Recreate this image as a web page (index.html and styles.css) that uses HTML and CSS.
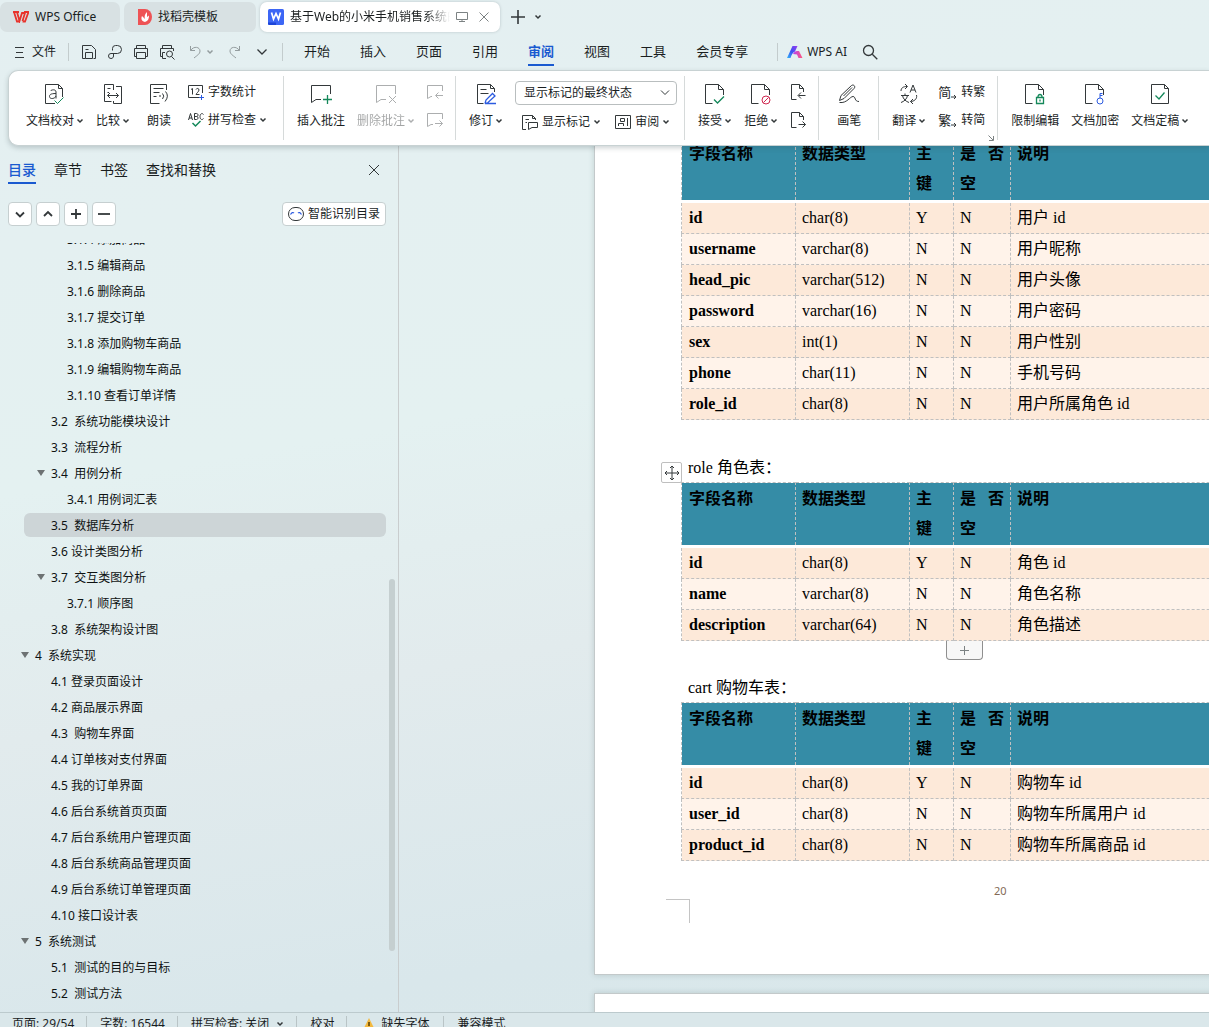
FILE: index.html
```html
<!DOCTYPE html>
<html lang="zh-CN">
<head>
    <meta charset="UTF-8">
    <meta name="viewport" content="width=device-width, initial-scale=1.0">
    <title>WPS Office</title>
    <link rel="stylesheet" href="styles.css">
</head>
<body>
    <!-- shared icon shapes -->
    <svg class="sprite" width="0" height="0" aria-hidden="true">
        <symbol id="chev" viewBox="0 0 8 8"><path d="M1.5 2.5L4 5l2.5-2.5" stroke-width="1.5"/></symbol>
        <symbol id="doc" viewBox="0 0 22 22"><path d="M8.500 20.500H1.500V1.500H14.500L19.500 6.500V12M14.500 1.500V6.500H19.500"/></symbol>
        <symbol id="bubble" viewBox="0 0 24 22"><path d="M12 16.500H7L2.500 19.500V2.500H21.500V11"/></symbol>
        <symbol id="tri" viewBox="0 0 8 6"><path d="M0 0H8L4 6Z"/></symbol>
    </svg>

    <header class="titlebar">
        <button class="tab tab-home">
            <svg width="16" height="12" viewBox="0 0 16 12"><path d="M0 1H6M4 1L6.500 10L9 2H12L9.500 10M1 1L4 10.500H6.500M9.500 10.500H12L15.500 1H11" stroke="#e8322b" stroke-width="1.8"/></svg>
            <span>WPS Office</span>
        </button>
        <button class="tab tab-docer">
            <svg width="14" height="16" viewBox="0 0 14 16"><path d="M0 0H7A7 8 0 0 1 7 16H0Z" fill="#ee5355" stroke="none"/><path d="M7 13C3 12 3 9 4 7L7 10C6 7 7 5 9 3V8L11 6.500C11 10 10 12 7 13Z" fill="#fff" stroke="none"/></svg>
            <span>找稻壳模板</span>
        </button>
        <div class="tab tab-active">
            <svg width="16" height="16" viewBox="0 0 16 16"><rect width="16" height="16" rx="1.500" fill="#3c66f5" stroke="none"/><path d="M0 13.500H8V16H1.500A1.500 1.500 0 0 1 0 14.500Z" fill="#1d45d8" stroke="none"/><path d="M3.500 3.500L5.500 10L8 4.500L10.500 10L12.500 3.500" stroke="#fff" stroke-width="1.7"/></svg>
            <span class="tab-title">基于Web的小米手机销售系统的设计</span>
            <svg class="dim" width="12" height="12" viewBox="0 0 12 12"><path d="M.5 1.500H11.500V8.500H.5ZM3 10.500H9M6 8.500V10.500"/></svg>
            <button class="tab-close" aria-label="关闭"><svg class="dim" width="10" height="10" viewBox="0 0 10 10"><path d="M.5.5L9.500 9.500M9.500.5L.5 9.500"/></svg></button>
        </div>
        <button class="new-tab" aria-label="新建"><svg width="14" height="14" viewBox="0 0 14 14"><path d="M7 0V14M0 7H14" stroke-width="1.6"/></svg></button>
        <button class="icon-btn" aria-label="标签列表"><svg width="8" height="8"><use href="#chev"/></svg></button>
    </header>

    <nav class="menubar">
        <button class="file-btn">
            <svg width="9" height="12" viewBox="0 0 9 12"><path d="M0 1.500H9M1 6.500H8M0 11.500H9"/></svg>
            <span>文件</span>
        </button>
        <i class="vline"></i>
        <div class="quick">
            <button aria-label="保存"><svg width="16" height="16" viewBox="0 0 16 16"><path d="M4.500 14.500H1.500V1.500H10.500L14.500 5.500V14.500H12.500M4.500 14.500V8.500H11.500V14.500ZM4.500 5.500H7.500"/></svg></button>
            <button aria-label="输出为PDF"><svg width="16" height="16" viewBox="0 0 16 16"><path d="M5.500 6.500V4.500A3 3 0 0 1 8.500 1.500H10.500A4 4 0 0 1 10.500 9.500H4A2 2 0 0 0 4 14.500C5.500 14.500 6.500 13.500 6.500 12V9.500"/></svg></button>
            <button aria-label="打印"><svg width="16" height="16" viewBox="0 0 16 16"><path d="M3.500 4.500V1.500H12.500V4.500M3.500 12.500H1.500V4.500H14.500V12.500H12.500M3.500 8.500H12.500V14.500H3.500Z"/></svg></button>
            <button aria-label="打印预览"><svg width="16" height="16" viewBox="0 0 16 16"><path d="M3.500 4.500V1.500H12.500V4.500M3.500 12.500H1.500V4.500H14.500V7M3.500 8.500H6M3.500 8.500V14.500H7M12.500 12.500L15.500 15.500"/><circle cx="10.500" cy="10" r="3"/></svg></button>
            <button class="undo" aria-label="撤销"><svg width="14" height="14" viewBox="0 0 14 14"><path d="M2.500 1V5.500H7M2.500 5.500C6 .5 12 2 12 6C12 9 9 10.500 6 13"/></svg><svg width="8" height="8"><use href="#chev"/></svg></button>
            <button class="undo" aria-label="恢复"><svg width="14" height="14" viewBox="0 0 14 14"><path d="M11.500 1V5.500H7M11.500 5.500C8 .5 2 2 2 6C2 9 5 10.500 8 13"/></svg></button>
            <button aria-label="更多"><svg width="12" height="8" viewBox="0 0 12 8"><path d="M1.500 1.500L6 6L10.500 1.500" stroke-width="1.300"/></svg></button>
        </div>
        <i class="vline"></i>
        <div class="menus">
            <button>开始</button>
            <button>插入</button>
            <button>页面</button>
            <button>引用</button>
            <button class="current">审阅</button>
            <button>视图</button>
            <button>工具</button>
            <button>会员专享</button>
        </div>
        <i class="vline"></i>
        <button class="ai">
            <svg width="16" height="12" viewBox="0 0 16 12"><defs><linearGradient id="ai1" x1="0" y1="1" x2="1" y2="0"><stop offset="0" stop-color="#2fb4f7"/><stop offset=".5" stop-color="#3d4ff3"/><stop offset="1" stop-color="#9a3cf0"/></linearGradient><linearGradient id="ai2"><stop offset="0" stop-color="#b53df2"/><stop offset="1" stop-color="#ff5a7d"/></linearGradient></defs><path d="M0 12L5.500 0H10.500L8 5.500C6 6 5 8 3.500 12Z" fill="url(#ai1)" stroke="none"/><path d="M6 8C7 5.500 9 5 12 5L15.500 12H11.500L10 8.500Z" fill="url(#ai2)" stroke="none"/></svg>
            <span>WPS AI</span>
        </button>
        <button class="icon-btn" aria-label="搜索"><svg width="16" height="16" viewBox="0 0 16 16"><circle cx="6.500" cy="6.500" r="5" stroke-width="1.300"/><path d="M10.300 10.300L15.300 15.300" stroke-width="1.300"/></svg></button>
    </nav>

    <section class="ribbon">
        <div class="group group-proof">
            <button class="big">
                <svg width="22" height="22" viewBox="0 0 22 22"><path d="M11 20.500H1.500V1.500H14.500L18.500 5.500V14M14.500 1.500V5.500H18.500M6.500 8C7.500 6.500 12 6 12 9V15.500M12 10.500C6 10.500 5.500 12 5.500 13.500C5.500 16.500 11 16 12 13"/><path class="green" d="M10.500 17.500L13.500 20.500L19.500 14.500"/></svg>
                <span>文档校对<svg width="8" height="8"><use href="#chev"/></svg></span>
            </button>
            <button class="big">
                <svg width="22" height="22" viewBox="0 0 22 22"><path d="M9.500 18.500H2.500V1.500H11.500V7M5.500 5.500H8.500M5.500 9.500H7M14 3.500H19.500V20.500H11.500V18M5.500 12.500H16.500M8 10L5.500 12.500L8 15M14 10L16.500 12.500L14 15"/></svg>
                <span>比较<svg width="8" height="8"><use href="#chev"/></svg></span>
            </button>
            <button class="big plain">
                <svg width="22" height="22" viewBox="0 0 22 22"><path d="M11.500 20.500H2.500V1.500H18.500V7M5.500 5.500H15.500M5.500 9.500H11.500M5.500 13.500H8.500M12 12V14M14.500 10.500Q17 13 14.500 16M17.500 8.500Q21.500 13 17 18.500"/></svg>
                <span>朗读</span>
            </button>
            <div class="stack">
                <button class="small">
                    <svg width="16" height="16" viewBox="0 0 16 16"><path d="M11 13.500H.5V1.500H14.500V9M3 5.500L4.500 4.500V10.500M8 5.500C8.500 4 11 4 11 6C11 7.500 8.500 9 8 10.500H11.500"/><path class="blue" d="M13.500 11V16M11 13.500H16"/></svg>
                    <span>字数统计</span>
                </button>
                <button class="small">
                    <svg width="16" height="16" viewBox="0 0 16 16"><path d="M.5 8L2.500 1.500L4.500 8M1 6H4M6.500 1.500V7.500H8.500C10.500 7.500 10.500 4.500 8.500 4.500H6.500M6.500 1.500H8.500C10.500 1.500 10.500 4.500 8.500 4.500M15.500 2.500C14 .5 12 2 12 4.500C12 7.500 14 8.500 15.500 6.500"/><path class="green" d="M4.500 11L7.500 14L12.500 9" stroke-width="1.500"/></svg>
                    <span>拼写检查</span><svg width="8" height="8"><use href="#chev"/></svg>
                </button>
            </div>
        </div>

        <div class="group">
            <button class="big">
                <svg width="24" height="22" viewBox="0 0 24 22"><use href="#bubble"/><path class="green" d="M18.500 12V21M14 16.500H23" stroke-width="1.300"/></svg>
                <span>插入批注</span>
            </button>
            <button class="big disabled" disabled>
                <svg width="24" height="22" viewBox="0 0 24 22"><use href="#bubble"/><path d="M15 13L22 20M22 13L15 20"/></svg>
                <span>删除批注<svg width="8" height="8"><use href="#chev"/></svg></span>
            </button>
            <div class="stack">
                <button class="small disabled" disabled aria-label="上一条"><svg width="16" height="16" viewBox="0 0 16 16"><path d="M5 12.500H4L.5 14.500V1.500H15.500V7M16 11.500H9M11.500 8.500L8.500 11.500L11.500 14.500"/></svg></button>
                <button class="small disabled" disabled aria-label="下一条"><svg width="16" height="16" viewBox="0 0 16 16"><path d="M6 12.500H4L.5 14.500V1.500H15.500V7M8 11.500H15.500M12.500 8.500L15.500 11.500L12.500 14.500"/></svg></button>
            </div>
        </div>

        <div class="group group-track">
            <button class="big">
                <svg width="22" height="22" viewBox="0 0 22 22"><path d="M8.500 20.500H2.500V1.500H15.500L19.500 5.500V9M15.500 1.500V5.500H19.500M5.500 6.500H11.500M5.500 10.500H13.500"/><path class="blue" d="M10 20.500L11 17L17.500 10.500L20 13L13 19.500L10 20.500H21" stroke-width="1.300"/></svg>
                <span>修订<svg width="8" height="8"><use href="#chev"/></svg></span>
            </button>
            <div class="stack">
                <div class="select-wrap">
                    <select aria-label="标记显示状态">
                        <option>显示标记的最终状态</option>
                        <option>最终状态</option>
                        <option>原始状态</option>
                    </select>
                    <svg width="10" height="6" viewBox="0 0 10 6"><path d="M1 .5L5 4.500L9 .5"/></svg>
                </div>
                <div class="small-row">
                    <button class="small">
                        <svg width="16" height="16" viewBox="0 0 16 16"><path d="M4 15.500H.5V1.500H10.500L13.500 4.500V6M10.500 1.500V4.500H13.500M3.500 5.500H7M3.500 8.500H5M6.500 8.500H15.500V13.500H10L6.500 15.500Z"/></svg>
                        <span>显示标记</span><svg width="8" height="8"><use href="#chev"/></svg>
                    </button>
                    <button class="small">
                        <svg width="16" height="16" viewBox="0 0 16 16"><path d="M.5 1.500H15.500V14.500H.5ZM12.500 4V12M5.500 4.500H9.500V7.500H5.500ZM3.500 12V9.500H8.500V12"/></svg>
                        <span>审阅</span><svg width="8" height="8"><use href="#chev"/></svg>
                    </button>
                </div>
            </div>
        </div>

        <div class="group">
            <button class="big">
                <svg width="22" height="22" viewBox="0 0 22 22"><use href="#doc"/><path class="green" d="M10 16.500L13.500 20L20 13.500" stroke-width="1.300"/></svg>
                <span>接受<svg width="8" height="8"><use href="#chev"/></svg></span>
            </button>
            <button class="big">
                <svg width="22" height="22" viewBox="0 0 22 22"><use href="#doc"/><g class="red"><circle cx="16" cy="17" r="4"/><path d="M13.500 19.500L18.500 14.500"/></g></svg>
                <span>拒绝<svg width="8" height="8"><use href="#chev"/></svg></span>
            </button>
            <div class="stack">
                <button class="small" aria-label="上一处修订"><svg width="16" height="16" viewBox="0 0 16 16"><path d="M6.500 15.500H1.500V.5H9.500L13.500 4.500V8M9.500 .5V4.500H13.500M15.500 11.500H8.500M11 8.500L8 11.500L11 14.500"/></svg></button>
                <button class="small" aria-label="下一处修订"><svg width="16" height="16" viewBox="0 0 16 16"><path d="M6.500 15.500H1.500V.5H9.500L13.500 4.500V8M9.500 .5V4.500H13.500M8.500 12.500H15.500M12.500 9.500L15.500 12.500L12.500 15.500"/></svg></button>
            </div>
        </div>

        <div class="group">
            <button class="big plain">
                <svg width="22" height="22" viewBox="0 0 22 22"><path d="M1.500 17.500L3 12.500L13.500 2.500C15.500 1 18 3.500 16 5.500L6 15.500ZM5.500 13L14 4.500M1.500 19.500C9 20.500 12 13.500 15 13.500C18 13.500 16 18.500 21 18.500"/></svg>
                <span>画笔</span>
            </button>
        </div>

        <div class="group">
            <button class="big">
                <svg width="22" height="22" viewBox="0 0 22 22"><path d="M12 9.500L15 2L18 9.500M13 7H17M3 8C3 5 5 3.500 9 3.500M7 1L9.500 3.500L7 6M18.500 12C19.500 16 16 18.500 12.500 18.500M15 16L12.500 18.500L15 21M3 12.500H11M7 10.500V12.500M9.500 12.500C9 16 6 18.500 3 19.500M4.500 12.500C5 16 8 18.500 11 19.500"/></svg>
                <span>翻译<svg width="8" height="8"><use href="#chev"/></svg></span>
            </button>
            <div class="stack">
                <button class="small"><span class="glyph">简<svg width="6" height="6" viewBox="0 0 6 6"><path d="M0 3H5M3 1L5 3L3 5"/></svg></span><span>转繁</span></button>
                <button class="small"><span class="glyph">繁<svg width="6" height="6" viewBox="0 0 6 6"><path d="M0 3H5M3 1L5 3L3 5"/></svg></span><span>转简</span></button>
            </div>
            <svg class="launcher dim" width="6" height="6" viewBox="0 0 6 6"><path d="M.5 .5L5 5M5.500 1V5.500H1"/></svg>
        </div>

        <div class="group">
            <button class="big">
                <svg width="22" height="22" viewBox="0 0 22 22"><use href="#doc"/><path class="green" d="M12.500 14.500H19.500V20.500H12.500ZM14 14.500C13.500 10.500 18.500 10.500 18 14.500M16 16.500V18.500" stroke-width="1.300"/></svg>
                <span>限制编辑</span>
            </button>
            <button class="big">
                <svg width="22" height="22" viewBox="0 0 22 22"><use href="#doc"/><g class="blue"><circle cx="16" cy="18" r="3"/><path d="M16 15V10.500H18.500M16 12.500H18.500"/></g></svg>
                <span>文档加密</span>
            </button>
            <button class="big">
                <svg width="22" height="22" viewBox="0 0 22 22"><path d="M2.500 1.500H15.500L19.500 5.500V20.500H2.500ZM15.500 1.500V5.500H19.500"/><path class="green" d="M6.500 12.500L10 16L15.500 9.500" stroke-width="1.300"/></svg>
                <span>文档定稿<svg width="8" height="8"><use href="#chev"/></svg></span>
            </button>
        </div>
    </section>

    <main class="workspace">
        <aside class="outline">
            <div class="side-tabs">
                <button class="current">目录</button>
                <button>章节</button>
                <button>书签</button>
                <button>查找和替换</button>
                <button class="side-close" aria-label="关闭"><svg width="12" height="12" viewBox="0 0 12 12"><path d="M1 1L11 11M11 1L1 11"/></svg></button>
            </div>
            <div class="side-tools">
                <button aria-label="展开"><svg width="12" height="12" viewBox="0 0 12 12"><path d="M2 4.500L6 8.500L10 4.500" stroke-width="1.800"/></svg></button>
                <button aria-label="收起"><svg width="12" height="12" viewBox="0 0 12 12"><path d="M2 8L6 4L10 8" stroke-width="1.800"/></svg></button>
                <button aria-label="放大"><svg width="12" height="12" viewBox="0 0 12 12"><path d="M6 1V11M1 6H11" stroke-width="1.800"/></svg></button>
                <button aria-label="缩小"><svg width="12" height="12" viewBox="0 0 12 12"><path d="M0 6H12" stroke-width="1.800"/></svg></button>
                <button class="smart">
                    <svg width="16" height="14" viewBox="0 0 16 14"><rect x=".5" y=".5" width="15" height="13" rx="6.500"/><path class="blue" d="M2.500 7.500Q4.500 4.500 6 6M10 6Q11.500 4.500 13.500 7.500" stroke-width="1.200"/></svg>
                    <span>智能识别目录</span>
                </button>
            </div>
            <div class="tree">
                <ul>
                    <li class="l3"><a href="#">3.1.4 添加商品</a></li>
                    <li class="l3"><a href="#">3.1.5 编辑商品</a></li>
                    <li class="l3"><a href="#">3.1.6 删除商品</a></li>
                    <li class="l3"><a href="#">3.1.7 提交订单</a></li>
                    <li class="l3"><a href="#">3.1.8 添加购物车商品</a></li>
                    <li class="l3"><a href="#">3.1.9 编辑购物车商品</a></li>
                    <li class="l3"><a href="#">3.1.10 查看订单详情</a></li>
                    <li class="l2"><a href="#">3.2  系统功能模块设计</a></li>
                    <li class="l2"><a href="#">3.3  流程分析</a></li>
                    <li class="l2"><a href="#"><svg width="8" height="6"><use href="#tri"/></svg>3.4  用例分析</a></li>
                    <li class="l3"><a href="#">3.4.1 用例词汇表</a></li>
                    <li class="l2 selected"><a href="#">3.5  数据库分析</a></li>
                    <li class="l2"><a href="#">3.6 设计类图分析</a></li>
                    <li class="l2"><a href="#"><svg width="8" height="6"><use href="#tri"/></svg>3.7  交互类图分析</a></li>
                    <li class="l3"><a href="#">3.7.1 顺序图</a></li>
                    <li class="l2"><a href="#">3.8  系统架构设计图</a></li>
                    <li class="l1"><a href="#"><svg width="8" height="6"><use href="#tri"/></svg>4  系统实现</a></li>
                    <li class="l2"><a href="#">4.1 登录页面设计</a></li>
                    <li class="l2"><a href="#">4.2 商品展示界面</a></li>
                    <li class="l2"><a href="#">4.3  购物车界面</a></li>
                    <li class="l2"><a href="#">4.4 订单核对支付界面</a></li>
                    <li class="l2"><a href="#">4.5 我的订单界面</a></li>
                    <li class="l2"><a href="#">4.6 后台系统首页页面</a></li>
                    <li class="l2"><a href="#">4.7 后台系统用户管理页面</a></li>
                    <li class="l2"><a href="#">4.8 后台系统商品管理页面</a></li>
                    <li class="l2"><a href="#">4.9 后台系统订单管理页面</a></li>
                    <li class="l2"><a href="#">4.10 接口设计表</a></li>
                    <li class="l1"><a href="#"><svg width="8" height="6"><use href="#tri"/></svg>5  系统测试</a></li>
                    <li class="l2"><a href="#">5.1  测试的目的与目标</a></li>
                    <li class="l2"><a href="#">5.2  测试方法</a></li>
                </ul>
                <i class="thumb"></i>
            </div>
        </aside>

        <div class="canvas">
            <article class="page">
                <table>
                    <colgroup><col class="c1"><col class="c2"><col class="c3"><col class="c4"><col></colgroup>
                    <thead>
                        <tr><th>字段名称</th><th>数据类型</th><th>主键</th><th><span class="spread">是 否</span>空</th><th>说明</th></tr>
                    </thead>
                    <tbody>
                        <tr><th>id</th><td>char(8)</td><td>Y</td><td>N</td><td>用户 id</td></tr>
                        <tr><th>username</th><td>varchar(8)</td><td>N</td><td>N</td><td>用户昵称</td></tr>
                        <tr><th>head_pic</th><td>varchar(512)</td><td>N</td><td>N</td><td>用户头像</td></tr>
                        <tr><th>password</th><td>varchar(16)</td><td>N</td><td>N</td><td>用户密码</td></tr>
                        <tr><th>sex</th><td>int(1)</td><td>N</td><td>N</td><td>用户性别</td></tr>
                        <tr><th>phone</th><td>char(11)</td><td>N</td><td>N</td><td>手机号码</td></tr>
                        <tr><th>role_id</th><td>char(8)</td><td>N</td><td>N</td><td>用户所属角色 id</td></tr>
                    </tbody>
                </table>
                <p>role 角色表：</p>
                <div class="table-box">
                    <button class="move-handle" aria-label="移动表格"><svg width="16" height="16" viewBox="0 0 16 16"><path d="M8 1V15M1 8H15M6 3L8 1L10 3M6 13L8 15L10 13M3 6L1 8L3 10M13 6L15 8L13 10"/></svg></button>
                    <table>
                        <colgroup><col class="c1"><col class="c2"><col class="c3"><col class="c4"><col></colgroup>
                        <thead>
                            <tr><th>字段名称</th><th>数据类型</th><th>主键</th><th><span class="spread">是 否</span>空</th><th>说明</th></tr>
                        </thead>
                        <tbody>
                            <tr><th>id</th><td>char(8)</td><td>Y</td><td>N</td><td>角色 id</td></tr>
                            <tr><th>name</th><td>varchar(8)</td><td>N</td><td>N</td><td>角色名称</td></tr>
                            <tr><th>description</th><td>varchar(64)</td><td>N</td><td>N</td><td>角色描述</td></tr>
                        </tbody>
                    </table>
                    <button class="add-row" aria-label="添加行"><svg class="dim" width="9" height="9" viewBox="0 0 9 9"><path d="M4.500 0V9M0 4.500H9"/></svg></button>
                </div>
                <p>cart 购物车表：</p>
                <table>
                    <colgroup><col class="c1"><col class="c2"><col class="c3"><col class="c4"><col></colgroup>
                    <thead>
                        <tr><th>字段名称</th><th>数据类型</th><th>主键</th><th><span class="spread">是 否</span>空</th><th>说明</th></tr>
                    </thead>
                    <tbody>
                        <tr><th>id</th><td>char(8)</td><td>Y</td><td>N</td><td>购物车 id</td></tr>
                        <tr><th>user_id</th><td>char(8)</td><td>N</td><td>N</td><td>购物车所属用户 id</td></tr>
                        <tr><th>product_id</th><td>char(8)</td><td>N</td><td>N</td><td>购物车所属商品 id</td></tr>
                    </tbody>
                </table>
                <footer>20</footer>
                <i class="crop"></i>
            </article>
            <article class="page page-next"></article>
        </div>
    </main>

    <footer class="statusbar">
        <span>页面: 29/54</span>
        <span>字数: 16544</span>
        <span>拼写检查: 关闭 <svg width="8" height="8"><use href="#chev"/></svg></span>
        <span>校对</span>
        <span class="warn"><svg width="12" height="12" viewBox="0 0 12 12"><path d="M6 0L12 12H0Z" fill="#f3b93f" stroke="none"/><path d="M6 4V8M6 9.500V11" stroke="#5a3c00" stroke-width="1.500"/></svg>缺失字体</span>
        <span>兼容模式</span>
    </footer>
</body>
</html>
```

FILE: styles.css
```css
* {
    box-sizing: border-box;
}

body {
    margin: 0;
    height: 100vh;
    overflow: hidden;
    display: flex;
    flex-direction: column;
    font-family: "Noto Sans", "Noto Sans CJK SC", sans-serif;
    font-size: 12px;
    line-height: 16px;
    color: #1a1e1f;
    background: linear-gradient(170deg, #e4eff1 0%, #e4f1f1 40%, #e2ebed 60%, #d9e7eb 85%, #dae8ea 100%);
}

button {
    font: inherit;
    color: inherit;
    background: none;
    border: 0;
    padding: 0;
    cursor: pointer;
    white-space: nowrap;
}

svg {
    fill: none;
    stroke: #33383a;
    flex: none;
    display: block;
}

.sprite {
    position: absolute;
}

.green {
    stroke: #14885a;
}

.blue {
    stroke: #2c5be0;
}

.red {
    stroke: #d0274f;
}

.dim {
    stroke: #7c8283;
}

/* title bar */
.titlebar {
    flex: none;
    display: flex;
    align-items: center;
    height: 34px;
    gap: 4px;
    padding-bottom: 1px;
}

.tab {
    display: flex;
    align-items: center;
    height: 30px;
    padding: 0 14px;
    gap: 6px;
    border-radius: 7px;
    background: #d8e1e3;
}

.tab-home {
    width: 120px;
    padding-left: 13px;
}

.tab-docer {
    width: 132px;
}

.tab-active {
    width: 240px;
    padding: 0 11px 0 8px;
    background: #fff;
    box-shadow: 0 0 3px #b7c3c5;
}

.tab-title {
    flex: 1;
    overflow: hidden;
    white-space: nowrap;
    -webkit-mask-image: linear-gradient(90deg, #000 85%, transparent);
    mask-image: linear-gradient(90deg, #000 85%, transparent);
}

.tab-close {
    margin-left: 5px;
}

.new-tab {
    margin: 0 5px 0 7px;
}

/* menu row */
.menubar {
    flex: none;
    display: flex;
    align-items: center;
    height: 36px;
}

.file-btn {
    display: flex;
    align-items: center;
    gap: 8px;
    padding: 0 12px 0 15px;
}

.vline {
    width: 1px;
    height: 18px;
    background: #c3cccd;
}

.quick {
    display: flex;
    align-items: center;
    gap: 10px;
    padding: 0 14px 0 12px;
}

.quick button {
    display: flex;
    align-items: center;
    gap: 4px;
}

.quick .undo {
    margin-left: 3px;
    opacity: 0.45;
}

.quick .undo + button {
    margin-left: 4px;
}

.menus {
    display: flex;
    gap: 30px;
    padding: 0 29px 0 21px;
    font-size: 13px;
}

.menus button {
    height: 28px;
    border-bottom: 2px solid transparent;
}

.menus .current {
    color: #1a5ad0;
    font-weight: bold;
    border-color: #1a5ad0;
}

.ai {
    display: flex;
    align-items: center;
    gap: 4px;
    padding: 0 15px 0 9px;
}

/* ribbon */
.ribbon {
    flex: none;
    position: relative;
    z-index: 2;
    display: flex;
    height: 76px;
    margin-left: 8px;
    padding: 5px 0;
    border: 1px solid #c8d2d3;
    border-right: 0;
    border-radius: 10px 0 0 10px;
    background: #fff;
    box-shadow: 0 2px 5px rgba(60, 80, 85, 0.25);
}

.group {
    position: relative;
    display: flex;
    gap: 12px;
    padding: 7px 12px 7px 13px;
    border-right: 1px solid #d6dada;
}

.group:last-child {
    border-right: 0;
}

.group-proof {
    padding: 7px 16px 7px 17px;
}

.group-track {
    padding-right: 7px;
}

.big {
    display: flex;
    flex-direction: column;
    align-items: center;
    gap: 8px;
}

.big > span {
    display: flex;
    align-items: center;
    gap: 2px;
}

.plain {
    padding: 0 5px;
}

.disabled {
    opacity: 0.4;
}

.stack {
    display: flex;
    flex-direction: column;
    gap: 5px;
}

.small {
    display: flex;
    align-items: center;
    gap: 4px;
    height: 24px;
    margin: -2px 0 2px;
}

.small-row {
    display: flex;
    gap: 14px;
    padding-left: 7px;
}

.small > svg + span + svg {
    margin-left: -1px;
}

.select-wrap {
    position: relative;
    height: 24px;
    margin: -2px 0 2px;
}

.select-wrap select {
    display: block;
    width: 162px;
    height: 24px;
    padding: 0 8px;
    appearance: none;
    font: inherit;
    color: inherit;
    background: #fff;
    border: 1px solid #b9bebf;
    border-radius: 4px;
}

.select-wrap svg {
    position: absolute;
    right: 7px;
    top: 9px;
    pointer-events: none;
}

.glyph {
    display: flex;
    align-items: flex-end;
    font-size: 13px;
}

.launcher {
    position: absolute;
    right: 3px;
    bottom: -1px;
}

/* workspace */
.workspace {
    flex: 1;
    min-height: 0;
    display: flex;
}

.outline {
    flex: none;
    display: flex;
    flex-direction: column;
    width: 399px;
    border-right: 1px solid #c9cdce;
}

.side-tabs {
    display: flex;
    align-items: center;
    gap: 18px;
    padding: 10px 18px 0 8px;
    font-size: 14px;
}

.side-tabs button {
    height: 28px;
    padding-top: 2px;
    border-bottom: 2px solid transparent;
}

.side-tabs .current {
    color: #1a5ad0;
    font-weight: 500;
    border-color: #1a5ad0;
}

.side-tabs .side-close {
    margin-left: auto;
}

.side-tools {
    display: flex;
    gap: 4px;
    padding: 18px 12px 17px 8px;
}

.side-tools button {
    display: flex;
    align-items: center;
    justify-content: center;
    width: 24px;
    height: 24px;
    background: #fff;
    border: 1px solid #c6cfd0;
    border-radius: 4px;
}

.side-tools .smart {
    width: auto;
    gap: 4px;
    margin-left: auto;
    padding: 0 5px;
}

.tree {
    position: relative;
    flex: 1;
    overflow: hidden;
    color: #0e1212;
}

.tree ul {
    list-style: none;
    margin: -17px 0 0;
    padding: 0 12px 0 24px;
}

.tree li {
    padding: 1px 0;
}

.tree a {
    display: block;
    position: relative;
    height: 24px;
    line-height: 26px;
    border-radius: 6px;
    color: inherit;
    text-decoration: none;
    white-space: pre;
}

.tree .selected a {
    background: #cdd5d7;
}

.l1 a {
    padding-left: 11px;
}

.l2 a {
    padding-left: 27px;
}

.l3 a {
    padding-left: 43px;
}

.tree svg {
    position: absolute;
    top: 9px;
    fill: #6d7273;
    stroke: none;
}

.l1 svg {
    left: -3px;
}

.l2 svg {
    left: 13px;
}

.thumb {
    position: absolute;
    right: 3px;
    top: 336px;
    width: 6px;
    height: 372px;
    border-radius: 3px;
    background: #c5cfd0;
}

/* document */
.canvas {
    flex: 1;
    min-width: 0;
    overflow: hidden;
    padding-left: 195px;
}

.page {
    position: relative;
    width: 794px;
    margin-top: -10px;
    padding: 0 87px 51px 86px;
    border: 1px solid #c3c9ca;
    background: #fff;
    box-shadow: 0 0 6px rgba(60, 80, 85, 0.2);
    font-family: "Liberation Serif", "Noto Sans CJK SC", serif;
    font-size: 16px;
    line-height: 30px;
    color: #000;
}

.page-next {
    height: 300px;
    margin-top: 18px;
}

table {
    width: 100%;
    table-layout: fixed;
    border-collapse: collapse;
}

.c1, .c2 {
    width: 114px;
}

.c3 {
    width: 44px;
}

.c4 {
    width: 57px;
}

th, td {
    height: 31px;
    padding: 0 6px;
    border: 1px dashed #c0c0c0;
    text-align: left;
    vertical-align: top;
}

th:first-child {
    padding-left: 7px;
}

thead th {
    height: 64px;
    padding-top: 1px;
    background: #358ca6;
    border-bottom: 3px solid #fff;
}

tbody tr {
    background: #fff3ea;
}

tbody tr:nth-child(odd) {
    background: #fde9d9;
}

.spread {
    display: block;
    white-space: nowrap;
    text-align-last: justify;
}

.page p {
    margin: 0 0 -1px;
    padding: 32px 0 0 7px;
}

.page table:first-child + p {
    padding-top: 33px;
}

.table-box {
    position: relative;
}

.move-handle {
    position: absolute;
    left: -20px;
    top: -20px;
    display: flex;
    align-items: center;
    justify-content: center;
    width: 21px;
    height: 21px;
    background: #fff;
    border: 1px solid #bfbfbf;
    border-radius: 2px;
}

.add-row {
    position: absolute;
    left: 265px;
    top: 100%;
    display: flex;
    align-items: center;
    justify-content: center;
    width: 37px;
    height: 19px;
    background: #f7f7f7;
    border: 1px solid #8f8f8f;
    border-top: 0;
    border-radius: 0 0 4px 4px;
}

.page footer {
    padding: 22px 0 0 313px;
    font-family: "Noto Sans", sans-serif;
    font-size: 11px;
    line-height: 16px;
    color: #846a55;
}

.crop {
    display: block;
    width: 24px;
    height: 24px;
    margin-left: -15px;
    border-top: 1px solid #c4c4c4;
    border-right: 1px solid #c4c4c4;
}

/* status bar, text runs past the window edge */
.statusbar {
    flex: none;
    display: flex;
    height: 15px;
    padding-top: 3px;
    overflow: hidden;
    border-top: 1px solid #bccacd;
    background: #dae7ea;
}

.statusbar span {
    display: flex;
    align-items: center;
    gap: 4px;
    height: 16px;
    padding: 0 12px 0 13px;
    white-space: pre;
    border-left: 1px solid #b9c4c6;
}

.statusbar span:first-child {
    padding-left: 12px;
    border-left: 0;
}

.statusbar .warn {
    gap: 6px;
    padding: 0 14px 0 16px;
}
```
